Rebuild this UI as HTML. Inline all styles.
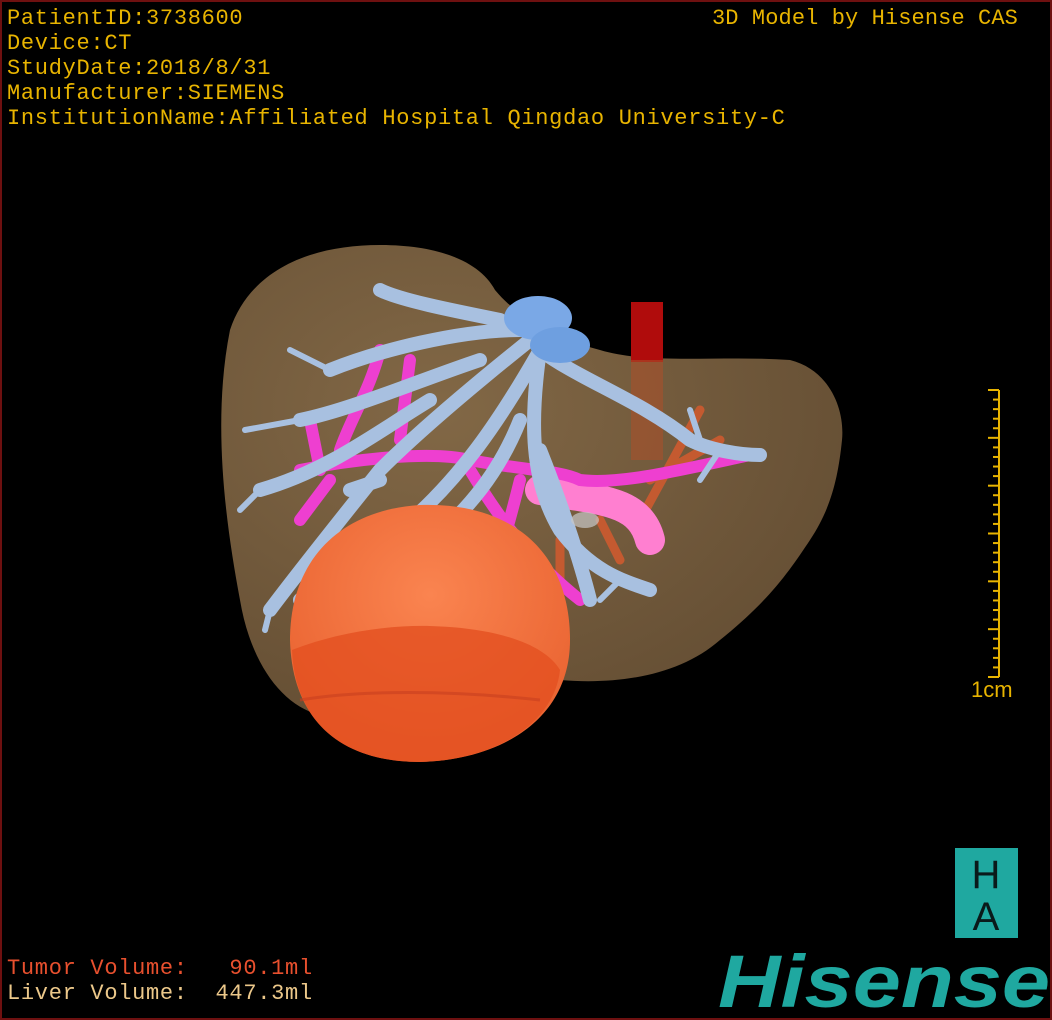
<!DOCTYPE html>
<html><head><meta charset="utf-8"><style>
html,body{margin:0;padding:0;background:#000}
#w{position:relative;width:1052px;height:1020px;background:#000;overflow:hidden;box-sizing:border-box;border:2px solid #6e1010}
.t{position:absolute;font-family:"Liberation Mono",monospace;font-size:22px;letter-spacing:0.7px;color:#e8b400;line-height:25px;white-space:pre}
</style></head><body><div id="w">
<svg width="1052" height="1020" style="position:absolute;left:-2px;top:-2px">
<defs>
<radialGradient id="lv" cx="0.35" cy="0.35" r="0.8"><stop offset="0" stop-color="#826846"/><stop offset="1" stop-color="#624c32"/></radialGradient>
<radialGradient id="tm" cx="0.5" cy="0.35" r="0.7"><stop offset="0" stop-color="#fa8450"/><stop offset="1" stop-color="#e8602e"/></radialGradient>
</defs>
<path d="M230 330 C250 270 310 245 380 245 C440 245 480 262 495 290 C520 320 560 340 600 350 C650 365 720 355 790 360 C830 370 845 410 842 440 C838 480 830 510 810 540 C790 570 770 600 720 640 C680 675 620 685 560 680 L320 715 C280 705 250 660 240 600 C225 520 212 420 230 330 Z" fill="url(#lv)"/>
<rect x="631" y="302" width="32" height="60" fill="#b00c0c"/>
<rect x="631" y="360" width="32" height="100" fill="#a8502c" opacity="0.6"/>
<g fill="none" stroke-linecap="round">
<path d="M620 560 L600 520 M640 520 L700 410 M650 480 L720 440 M560 540 L560 580" stroke="#c45a30" stroke-width="9"/>
<path d="M540 490 C600 500 640 500 650 540" stroke="#ff7fd0" stroke-width="30"/>
<g stroke="#ee3fd0" stroke-width="12">
<path d="M300 470 C350 460 430 450 470 460 C520 470 560 470 580 480 C620 485 680 470 750 455"/>
<path d="M340 450 C350 420 370 390 380 350 M400 440 L410 360 M320 470 L310 420 M330 480 L300 520 M470 470 C500 520 530 560 580 600 M520 480 C510 520 500 560 480 600"/>
</g>
<g stroke="#a8c0e0" stroke-width="14">
<path d="M530 340 C480 380 420 430 380 470 C340 520 300 570 270 610"/>
<path d="M540 350 C500 420 460 480 400 530 C360 560 320 580 300 600"/>
<path d="M540 350 C530 420 530 480 560 530 C590 570 620 580 650 590"/>
<path d="M540 350 C580 380 640 400 690 440 C710 450 740 455 760 455"/>
<path d="M520 330 C460 330 380 350 330 370 M500 320 C450 310 400 300 380 290 M480 360 C420 380 350 410 300 420 M430 400 C380 430 330 470 260 490 M520 420 C500 470 470 510 420 550 M540 450 C560 500 580 560 590 600 M380 480 L350 490"/>
</g>
<g stroke="#a8c0e0" stroke-width="6">
<path d="M300 420 L245 430 M260 490 L240 510 M270 610 L265 630 M330 370 L290 350 M380 290 L395 295 M430 540 L380 560 M700 440 L690 410 M720 450 L700 480 M620 580 L600 600"/>
</g>
</g>
<ellipse cx="538" cy="318" rx="34" ry="22" fill="#7aa8e6"/>
<ellipse cx="560" cy="345" rx="30" ry="18" fill="#6e9fe0"/>
<ellipse cx="585" cy="520" rx="14" ry="8" fill="#c8c8c8" opacity="0.7"/>
<path d="M290 640 C290 560 340 510 420 505 C510 502 570 550 570 640 C570 720 500 760 420 762 C340 762 292 720 290 640 Z" fill="url(#tm)"/>
<path d="M292 650 C330 635 380 625 430 626 C500 628 545 645 560 670 C555 720 500 760 420 762 C340 762 295 720 292 650 Z" fill="#e45020" opacity="0.8"/>
<path d="M300 700 C360 690 450 690 540 700" stroke="#c84020" stroke-width="3" fill="none" opacity="0.6"/>
<g stroke="#e8b400" stroke-width="2">
<line x1="999" y1="390" x2="999" y2="677"/>
</g>
<g id="ticks" stroke="#e8b400" stroke-width="2"></g>
<rect x="955" y="848" width="63" height="90" fill="#1fa8a0"/>
<text x="986" y="888" font-family="Liberation Sans,sans-serif" font-size="40" fill="#0a1a1a" text-anchor="middle">H</text>
<text x="986" y="930" font-family="Liberation Sans,sans-serif" font-size="40" fill="#0a1a1a" text-anchor="middle">A</text>
<text x="718" y="1007" font-family="Liberation Sans,sans-serif" font-size="74" font-weight="bold" font-style="italic" fill="#1fa8a0" textLength="332" lengthAdjust="spacingAndGlyphs">Hisense</text>
<text x="971" y="697" font-family="Liberation Sans,sans-serif" font-size="22" fill="#e8b400">1cm</text>
</svg>
<div class="t" style="left:5px;top:4px">PatientID:3738600
Device:CT
StudyDate:2018/8/31
Manufacturer:SIEMENS
InstitutionName:Affiliated Hospital Qingdao University-C</div>
<div class="t" style="left:710px;top:4px;letter-spacing:0.1px">3D Model by Hisense CAS</div>
<div class="t" style="left:5px;top:954px;color:#e8502e">Tumor Volume:   90.1ml</div>
<div class="t" style="left:5px;top:979px;color:#ecc88a">Liver Volume:  447.3ml</div>
</div>
<script>
var g=document.getElementById('ticks'),s='';
for(var i=0;i<=30;i++){var y=390+i*287/30,l=(i%5==0)?11:6;s+='<line x1="'+(999-l)+'" y1="'+y+'" x2="999" y2="'+y+'"/>';}
g.innerHTML=s;
</script>
</body></html>
